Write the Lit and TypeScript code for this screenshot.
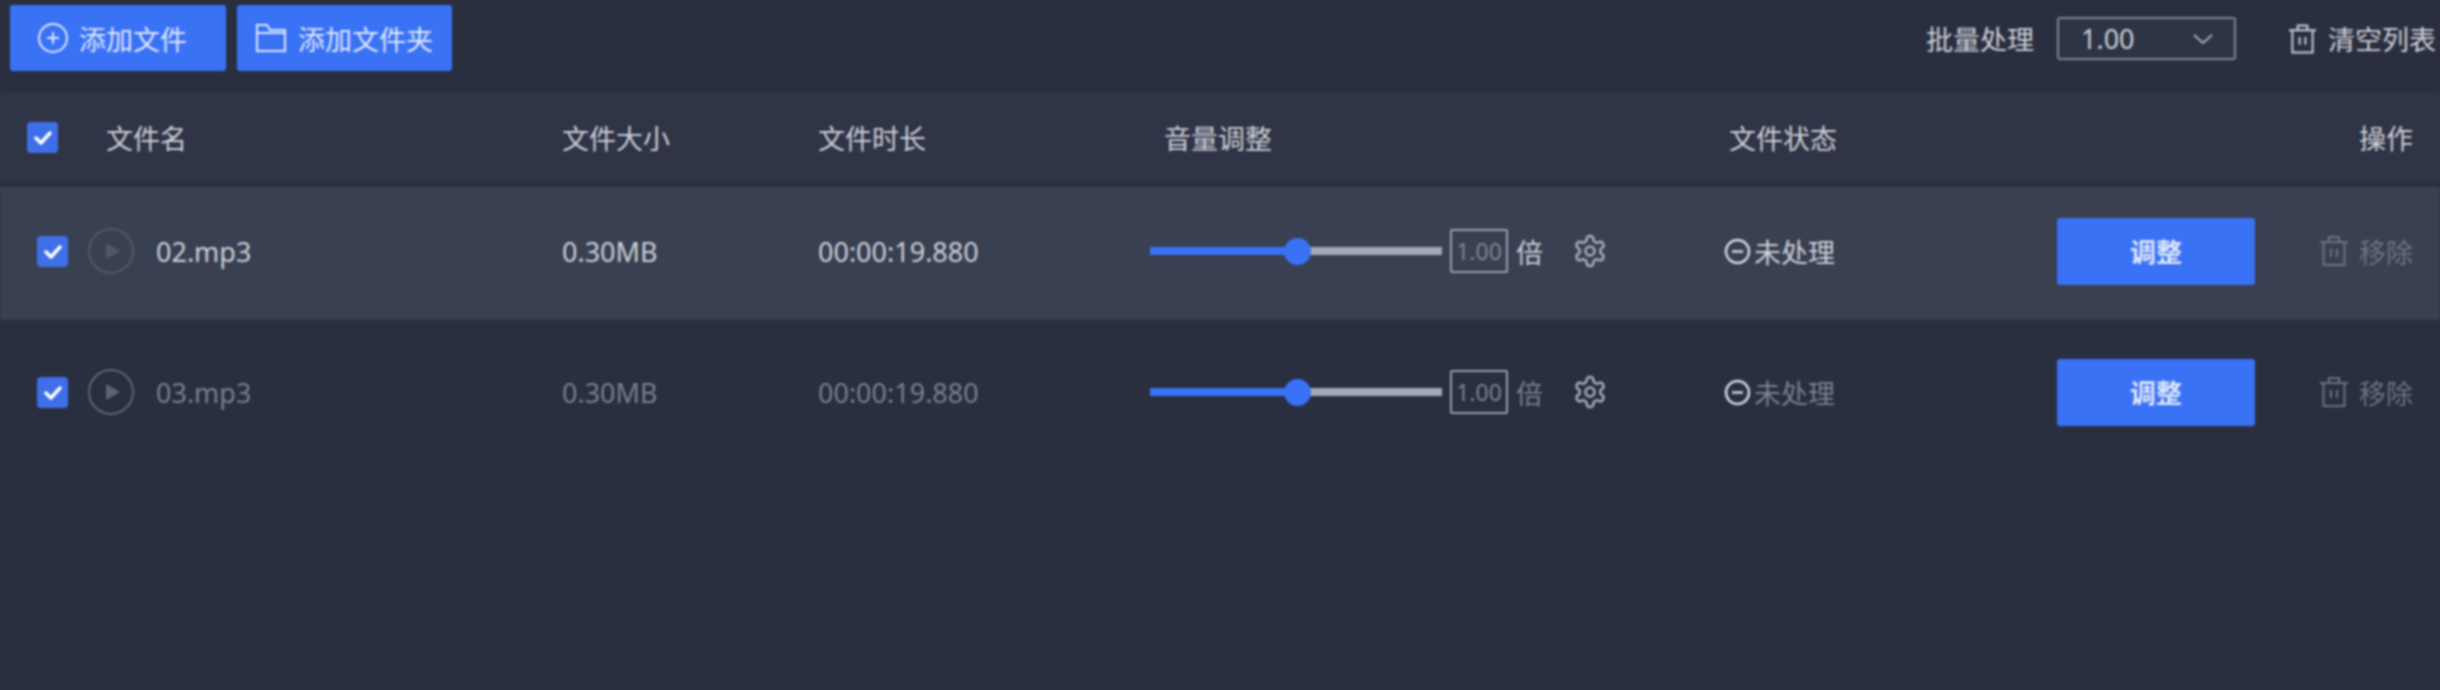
import { LitElement, html, css } from "lit";
import { customElement } from "lit/decorators.js";

const gearPath =
  "M12.22 2h-.44a2 2 0 0 0-2 2v.18a2 2 0 0 1-1 1.73l-.43.25a2 2 0 0 1-2 0l-.15-.08a2 2 0 0 0-2.73.73l-.22.38a2 2 0 0 0 .73 2.73l.15.1a2 2 0 0 1 1 1.72v.51a2 2 0 0 1-1 1.74l-.15.09a2 2 0 0 0-.73 2.73l.22.38a2 2 0 0 0 2.73.73l.15-.08a2 2 0 0 1 2 0l.43.25a2 2 0 0 1 1 1.73V20a2 2 0 0 0 2 2h.44a2 2 0 0 0 2-2v-.18a2 2 0 0 1 1-1.73l.43-.25a2 2 0 0 1 2 0l.15.08a2 2 0 0 0 2.73-.73l.22-.39a2 2 0 0 0-.73-2.73l-.15-.08a2 2 0 0 1-1-1.74v-.5a2 2 0 0 1 1-1.74l.15-.09a2 2 0 0 0 .73-2.73l-.22-.38a2 2 0 0 0-2.73-.73l-.15.08a2 2 0 0 1-2 0l-.43-.25a2 2 0 0 1-1-1.73V4a2 2 0 0 0-2-2z";

const trash = (cls: string) => html`<svg class=${cls} viewBox="0 0 30 32" fill="none" stroke="currentColor" stroke-width="2">
  <path d="M1 7h28M10 7V2h10v5M4.500 7v23h21V7M12 14v8M18 14v8" />
</svg>`;

const check = html`<span class="check"><svg viewBox="0 0 31 31" fill="none" stroke="#fff" stroke-width="3.500" stroke-linecap="round" stroke-linejoin="round"><path d="M9 16l5 5 9-10" /></svg></span>`;

const play = html`<svg class="play" viewBox="0 0 46 46" fill="none">
  <circle cx="23" cy="23" r="22" stroke="currentColor" stroke-width="2" />
  <path d="M18 15l14 8-14 8z" fill="currentColor" />
</svg>`;

const files = [
  { name: "02.mp3", active: true },
  { name: "03.mp3", active: false },
];

@customElement("app-root")
export class AppRoot extends LitElement {
  static styles = css`
    :host {
      display: block;
      width: 2440px;
      height: 690px;
      overflow: hidden;
      background: #2a2f3f;
      color: #cdd0d7;
      font-family: "Noto Sans", "Noto Sans CJK SC", sans-serif;
      font-size: 27px;
    }
    .page { filter: blur(0.8px); }
    svg { display: block; flex: none; }
    .top {
      height: 92px;
      box-sizing: border-box;
      padding: 5px 4px 0 10px;
      display: flex;
      align-items: flex-start;
      background: #2a2f3f;
    }
    .btn {
      height: 66px;
      width: 216px;
      box-sizing: border-box;
      display: flex;
      align-items: center;
      background: #3a72f6;
      color: #dfe7fb;
      border-radius: 3px;
      white-space: nowrap;
    }
    .btn + .btn { margin-left: 11px; width: 215px; }
    .btn svg { width: 30px; height: 30px; margin: 0 11px 0 28px; }
    .btn + .btn svg { margin: 0 12px 0 19px; }
    .tools {
      margin-left: auto;
      height: 43px;
      margin-top: 12px;
      display: flex;
      align-items: center;
      white-space: nowrap;
    }
    .select {
      width: 179px;
      height: 43px;
      margin-left: 23px;
      box-sizing: border-box;
      border: 2px solid #7f8596;
      border-radius: 3px;
      padding: 0 20px 0 22px;
      display: flex;
      align-items: center;
      justify-content: space-between;
      background: #2f3445;
    }
    .select svg { width: 22px; height: 12px; }
    .clear-icon { width: 29px; height: 32px; margin: 0 11px 0 52px; }
    .head, .row {
      display: grid;
      grid-template-columns: 562px 256px 332px 574px 200px 1fr;
      align-items: center;
    }
    .head {
      height: 91px;
      background: #2f3446;
      border-bottom: 4px solid #2b3040;
    }
    .row { height: 133px; padding-bottom: 5px; box-sizing: border-box; }
    .row + .row { height: 144px; padding-bottom: 0; }
    .row.active { background: #394052; }
    .row:not(.active) { color: #7b8190; }
    .name { display: flex; align-items: center; }
    .head .name { padding-left: 27px; }
    .row .name { padding-left: 37px; }
    .check {
      width: 31px;
      height: 31px;
      border-radius: 4px;
      background: #3f6fe8;
      display: block;
      flex: none;
    }
    .head .check { margin-right: 48px; }
    .play { width: 46px; height: 46px; margin: 0 22px 0 20px; color: #525869; }
    .row:not(.active) .play { color: #5f6575; }
    .vol-head { padding-left: 14px; }
    .status-head { padding-left: 5px; }
    .actions-head { text-align: right; padding-right: 27px; }
    .vol { display: flex; align-items: center; }
    .slider {
      width: 292px;
      height: 8px;
      background: #a5a9b6;
      display: flex;
      align-items: center;
    }
    .fill { height: 8px; width: 147px; background: #3a72f6; flex: none; }
    .thumb {
      width: 27px;
      height: 27px;
      border-radius: 50%;
      background: #3a72f6;
      flex: none;
      margin-left: -13px;
    }
    .input {
      width: 58px;
      height: 44px;
      box-sizing: border-box;
      margin-left: 8px;
      border: 2px solid #9a9fac;
      border-radius: 2px;
      color: #7f8594;
      font-size: 23px;
      display: flex;
      align-items: center;
      justify-content: center;
    }
    .unit { margin-left: 8px; }
    .gear { width: 36px; height: 36px; margin-left: 29px; color: #a9adb8; }
    .status { display: flex; align-items: center; gap: 3px; }
    .status svg { width: 27px; height: 27px; color: #d4d7dd; }
    .actions {
      display: flex;
      align-items: center;
      justify-content: flex-end;
      padding-right: 27px;
      color: #6c7281;
    }
    .adjust {
      width: 198px;
      height: 67px;
      background: #3a72f6;
      color: #dfe7fb;
      border-radius: 3px;
      font-size: 26px;
      font-weight: 600;
      display: flex;
      align-items: center;
      justify-content: center;
      margin-right: 64px;
    }
    .remove-icon { width: 30px; height: 32px; margin-right: 10px; }
  `;

  render() {
    return html`
      <div class="page">
        <div class="top">
          <div class="btn">
            <svg viewBox="0 0 30 30" fill="none" stroke="currentColor" stroke-width="2"><circle cx="15" cy="15" r="14" /><path d="M15 9v12M9 15h12" /></svg>
            添加文件
          </div>
          <div class="btn">
            <svg viewBox="0 0 30 30" fill="none" stroke="currentColor" stroke-width="2"><path d="M1 28V2h10l3 5h15v21zM1 10h28" /></svg>
            添加文件夹
          </div>
          <div class="tools">
            批量处理
            <div class="select">1.00
              <svg viewBox="0 0 22 12" fill="none" stroke="#a9adb8" stroke-width="2"><path d="M2 2l9 8 9-8" /></svg>
            </div>
            ${trash("clear-icon")}
            清空列表
          </div>
        </div>
        <div class="head">
          <div class="name">${check}文件名</div>
          <div>文件大小</div>
          <div>文件时长</div>
          <div class="vol-head">音量调整</div>
          <div class="status-head">文件状态</div>
          <div class="actions-head">操作</div>
        </div>
        ${files.map(
          (f) => html`<div class="row ${f.active ? "active" : ""}">
            <div class="name">${check}${play}${f.name}</div>
            <div>0.30MB</div>
            <div>00:00:19.880</div>
            <div class="vol">
              <div class="slider"><div class="fill"></div><div class="thumb"></div></div>
              <div class="input">1.00</div>
              <span class="unit">倍</span>
              <svg class="gear" viewBox="0 0 24 24" fill="none" stroke="currentColor" stroke-width="1.700">
                <path d=${gearPath} /><circle cx="12" cy="12" r="3" />
              </svg>
            </div>
            <div class="status">
              <svg viewBox="0 0 27 27" fill="none" stroke="currentColor" stroke-width="2.500"><circle cx="13.500" cy="13.500" r="11.500" /><path d="M8 13.500h11" /></svg>
              未处理
            </div>
            <div class="actions">
              <div class="adjust">调整</div>
              ${trash("remove-icon")}
              移除
            </div>
          </div>`
        )}
      </div>
    `;
  }
}
